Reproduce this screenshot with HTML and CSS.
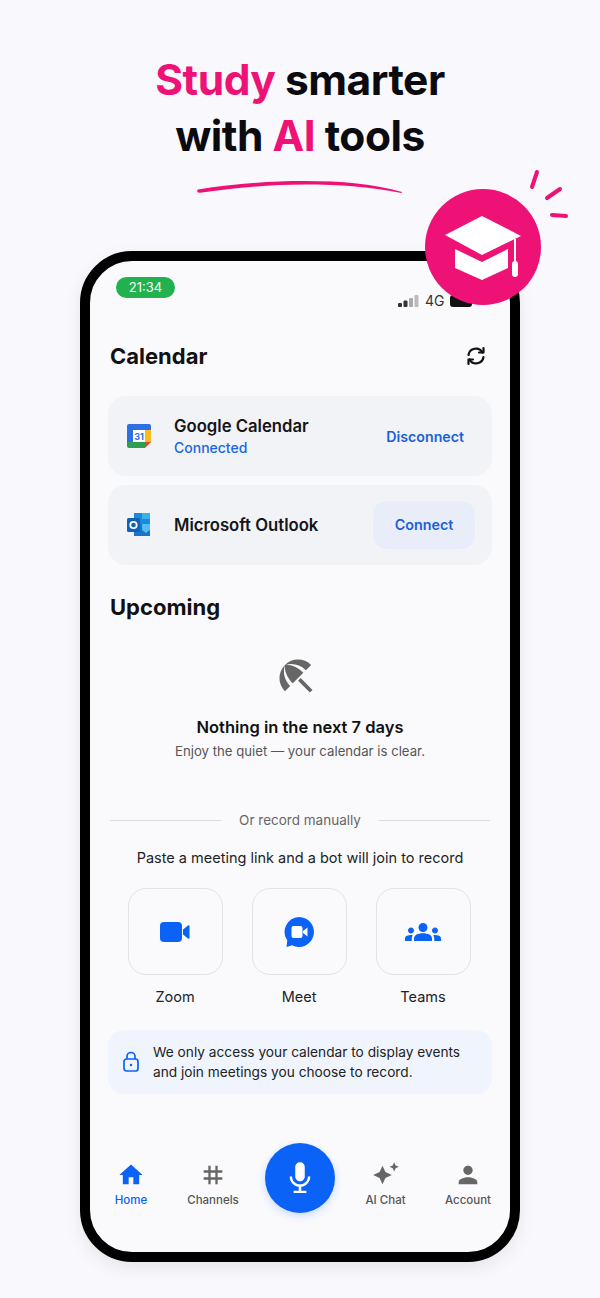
FILE: index.html
```html
<!DOCTYPE html>
<html>
<head>
<title>Study smarter with AI tools</title>
<link rel="stylesheet" href="styles.css">
</head>
<body>

<div class="page">

	<h1 class="headline"><span class="pink">Study</span> smarter<br>with <span class="pink">AI</span> tools</h1>

	<svg class="swoosh" width="206" height="14" viewBox="0 0 206 14">
		<path d="M1 9.500C35 4 70 1 108 1c36 0 70 3 97 11l-.4 1C176 7 142 4.500 108 4.500 72 4.500 36 8 3 12.800 0 13.200-.5 10 1 9.500z" fill="#ee1277"/>
	</svg>

	<svg class="badge" width="150" height="150" viewBox="0 0 150 150">
		<circle cx="63" cy="82" r="58" fill="#ee1277"/>
		<path d="M62 51l39 20-39 19-37-20z" fill="#fff"/>
		<path d="M35 84l27 13 26-13v19l-26 12-27-12z" fill="#fff"/>
		<path d="M95 74v22" stroke="#fff" stroke-width="2"/>
		<rect x="92" y="96" width="6" height="16" rx="3" fill="#fff"/>
		<g stroke="#ee1277" stroke-width="4" stroke-linecap="round">
			<path d="M117 7l-5 15"/>
			<path d="M140 24l-13 9"/>
			<path d="M132 50l14 1"/>
		</g>
	</svg>

	<div class="phone">
		<div class="status">
			<span class="clock">21:34</span>
			<div class="status-right">
				<svg width="22" height="12" viewBox="0 0 22 12">
					<rect x="0" y="8" width="4" height="4" rx="1" fill="#333"/>
					<rect x="5.500" y="5.500" width="4" height="6.500" rx="1" fill="#333"/>
					<rect x="11" y="3" width="4" height="9" rx="1" fill="#aaa"/>
					<rect x="16.500" y="0" width="4" height="12" rx="1" fill="#bbb"/>
				</svg>
				<span>4G</span>
				<span class="battery"></span>
			</div>
		</div>

		<div class="title-row">
			<h2>Calendar</h2>
			<svg class="sync" width="24" height="24" viewBox="0 0 24 24" fill="none" stroke="#111" stroke-width="2.200" stroke-linecap="round" stroke-linejoin="round">
				<path d="M4.500 11A7.500 7.500 0 0 1 18.500 8.500"/>
				<path d="M19.500 4v4.500H15"/>
				<path d="M19.500 13A7.500 7.500 0 0 1 5.500 15.500"/>
				<path d="M4.500 20v-4.500H9"/>
			</svg>
		</div>

		<div class="card">
			<svg class="card-icon" width="26" height="26" viewBox="0 0 26 26">
				<path d="M3 1h20a2 2 0 0 1 2 2v4H1V3a2 2 0 0 1 2-2z" fill="#2f6fe4"/>
				<rect x="1" y="7" width="6" height="12" fill="#2f6fe4"/>
				<rect x="19" y="7" width="6" height="13" fill="#f6bd1c"/>
				<path d="M1 19h18v6H3a2 2 0 0 1-2-2z" fill="#2f9e52"/>
				<path d="M19 19h6l-6 6z" fill="#e5432f"/>
				<rect x="7" y="7" width="12" height="12" fill="#fff"/>
				<text x="13" y="17" class="cal-day">31</text>
			</svg>
			<div class="card-text">
				<div class="card-name">Google Calendar</div>
				<div class="card-state">Connected</div>
			</div>
			<span class="card-link">Disconnect</span>
		</div>

		<div class="card">
			<svg class="card-icon" width="26" height="26" viewBox="0 0 26 26">
				<rect x="8" y="1" width="16" height="11" fill="#1e88d9"/>
				<rect x="16" y="1" width="8" height="6" fill="#35b2ec"/>
				<path d="M8 12h16v12H8z" fill="#1a74c9"/>
				<path d="M16 12h8v6l-4 3-4-3z" fill="#52bdf0"/>
				<rect x="1" y="6" width="13" height="14" rx="1.500" fill="#0f63b8"/>
				<circle cx="7.500" cy="13" r="3.200" fill="none" stroke="#fff" stroke-width="1.800"/>
			</svg>
			<div class="card-text">
				<div class="card-name">Microsoft Outlook</div>
			</div>
			<span class="card-btn">Connect</span>
		</div>

		<h2 class="upcoming">Upcoming</h2>

		<div class="empty">
			<svg class="empty-icon" width="44" height="44" viewBox="0 0 24 24" fill="#666"><path d="M13.127 14.560l1.430-1.430 6.440 6.443L19.570 21zm4.293-5.730l2.860-2.860c-3.950-3.950-10.350-3.960-14.300-.02 3.930-1.300 8.310-.25 11.440 2.880zM5.950 5.980c-3.940 3.950-3.930 10.350.02 14.300l2.860-2.860C5.700 14.290 4.650 9.910 5.950 5.980zm.02-.02l-.01.01c-.38 3.010 1.170 6.880 4.300 10.020l5.730-5.730c-3.130-3.130-7.010-4.680-10.020-4.300z"/></svg>
			<div class="empty-title">Nothing in the next 7 days</div>
			<div class="empty-sub">Enjoy the quiet — your calendar is clear.</div>
		</div>

		<div class="divider"><span>Or record manually</span></div>
		<p class="paste">Paste a meeting link and a bot will join to record</p>

		<div class="services">
			<div class="service">
				<div class="service-box">
					<svg width="30" height="22" viewBox="0 0 30 22" fill="#0b62f6"><rect x="0" y="1" width="22" height="20" rx="4"/><path d="M23 8.500l5-4c.8-.6 1.500-.2 1.500.7v11.600c0 .9-.7 1.300-1.500.7l-5-4z"/></svg>
				</div>
				<span>Zoom</span>
			</div>
			<div class="service">
				<div class="service-box">
					<svg width="30" height="30" viewBox="0 0 30 30"><path d="M15 0a15 15 0 1 1-7 28.300L2.500 30l.8-6.500A15 15 0 0 1 15 0z" fill="#0b62f6"/><rect x="7.500" y="9" width="11" height="12" rx="2" fill="#fff"/><path d="M19 14l4.500-3.500v9L19 16z" fill="#fff"/></svg>
				</div>
				<span>Meet</span>
			</div>
			<div class="service">
				<div class="service-box">
					<svg width="36" height="36" viewBox="0 0 24 24" fill="#0b62f6"><path d="M12 12.750c1.630 0 3.070.39 4.240.9 1.080.48 1.760 1.560 1.760 2.730V18H6v-1.610c0-1.180.68-2.260 1.760-2.730 1.170-.52 2.610-.91 4.240-.91zM4 13c1.100 0 2-.9 2-2s-.9-2-2-2-2 .9-2 2 .9 2 2 2zm1.130 1.100c-.37-.06-.74-.1-1.130-.1-.99 0-1.930.21-2.780.58C.48 14.900 0 15.620 0 16.430V18h4.500v-1.610c0-.83.23-1.610.63-2.290zM20 13c1.100 0 2-.9 2-2s-.9-2-2-2-2 .9-2 2 .9 2 2 2zm4 3.430c0-.81-.48-1.530-1.220-1.850-.85-.37-1.790-.58-2.780-.58-.39 0-.76.04-1.130.1.4.68.63 1.460.63 2.290V18H24v-1.570zM12 6c1.660 0 3 1.340 3 3s-1.340 3-3 3-3-1.340-3-3 1.340-3 3-3z"/></svg>
				</div>
				<span>Teams</span>
			</div>
		</div>

		<div class="notice">
			<svg class="notice-icon" width="20" height="22" viewBox="0 0 20 22" fill="none" stroke="#0b62f6" stroke-width="1.700"><rect x="3" y="8" width="14" height="12" rx="2.500"/><path d="M6 8V5.500a4 4 0 0 1 8 0V8"/><circle cx="10" cy="14" r="1.200" fill="#0b62f6" stroke="none"/></svg>
			<p>We only access your calendar to display events and join meetings you choose to record.</p>
		</div>

		<nav class="nav">
			<div class="nav-item active">
				<svg width="28" height="28" viewBox="0 0 24 24"><path d="M10 20v-6h4v6h4.500a.5.500 0 0 0 .5-.5V12h3L12 3 2 12h3v7.500a.5.500 0 0 0 .5.5z"/></svg>
				<span>Home</span>
			</div>
			<div class="nav-item">
				<svg width="28" height="28" viewBox="0 0 24 24"><path d="M20 10V8h-4V4h-2v4h-4V4H8v4H4v2h4v4H4v2h4v4h2v-4h4v4h2v-4h4v-2h-4v-4h4zm-6 4h-4v-4h4v4z"/></svg>
				<span>Channels</span>
			</div>
			<div class="mic">
				<svg width="38" height="38" viewBox="0 0 24 24" fill="#fff"><path d="M12 14c1.660 0 3-1.340 3-3V5c0-1.660-1.340-3-3-3S9 3.340 9 5v6c0 1.660 1.340 3 3 3zM17 11c0 2.760-2.240 5-5 5s-5-2.240-5-5H5.500c0 3.400 2.600 6.100 5.700 6.500V20H8v1.500h8V20h-3.200v-2.500c3.100-.4 5.700-3.100 5.700-6.500z"/></svg>
			</div>
			<div class="nav-item">
				<svg width="28" height="28" viewBox="0 0 24 24"><path d="M19 9l1.250-2.750L23 5l-2.750-1.250L19 1l-1.250 2.750L15 5l2.750 1.250L19 9zm-7.500.5L9 4 6.500 9.500 1 12l5.500 2.500L9 20l2.500-5.500L17 12l-5.500-2.500z"/></svg>
				<span>AI Chat</span>
			</div>
			<div class="nav-item">
				<svg width="28" height="28" viewBox="0 0 24 24"><path d="M12 12c2.210 0 4-1.790 4-4s-1.790-4-4-4-4 1.790-4 4 1.790 4 4 4zm0 2c-2.670 0-8 1.340-8 4v2h16v-2c0-2.660-5.330-4-8-4z"/></svg>
				<span>Account</span>
			</div>
		</nav>
	</div>

</div>

</body>
</html>
```

FILE: styles.css
```css
body {
	margin: 0;
	background-color: #f9f9fd;
	font-family: "Inter", "Liberation Sans", sans-serif;
	color: #111;
}

h1, h2, p {
	margin: 0;
}

.page {
	position: relative;
	width: 600px;
	height: 1298px;
	overflow: hidden;
	display: flex;
	flex-direction: column;
	align-items: center;
}

/* heading */

.headline {
	margin-top: 52px;
	font-size: 42.500px;
	line-height: 56px;
	font-weight: 700;
	letter-spacing: -0.5px;
	text-align: center;
	color: #0b0b0f;
}

.pink {
	color: #ee1277;
}

.swoosh {
	display: block;
	margin-top: 16px;
}

.badge {
	position: absolute;
	left: 420px;
	top: 165px;
	z-index: 2;
}

/* phone */

.phone {
	box-sizing: border-box;
	width: 440px;
	height: 1011px;
	margin-top: 57px;
	border: 10px solid #000;
	border-radius: 52px;
	padding: 0 18px;
	display: flex;
	flex-direction: column;
	background-color: #fafafd;
	box-shadow: 0 6px 18px rgba(0, 0, 0, 0.08);
}

.status {
	display: flex;
	justify-content: space-between;
	align-items: flex-start;
	height: 46px;
	padding: 16px 0 0 8px;
}

.clock {
	width: 59px;
	height: 21px;
	line-height: 21px;
	border-radius: 11px;
	background-color: #22b14f;
	color: #fff;
	font-size: 13px;
	text-align: center;
}

.status-right {
	display: flex;
	align-items: center;
	gap: 5px;
	width: 94px;
	margin-top: 15px;
	font-size: 14px;
	color: #333;
}

.battery {
	width: 22px;
	height: 12px;
	border-radius: 3px;
	background-color: #111;
}

.title-row {
	display: flex;
	justify-content: space-between;
	align-items: center;
	padding: 0 2px;
	margin-top: 15px;
	height: 36px;
}

h2 {
	font-size: 22px;
	font-weight: 700;
}

.sync {
	margin-right: 2px;
}

.card {
	display: flex;
	align-items: center;
	height: 80px;
	box-sizing: border-box;
	padding: 0 18px;
	margin-bottom: 9px;
	border-radius: 18px;
	background-color: #f2f3f6;
}

.title-row + .card {
	margin-top: 22px;
}

.card-icon {
	flex: none;
}

.card-text {
	flex: 1;
	margin-left: 22px;
}

.card-name {
	font-size: 16.700px;
	font-weight: 600;
	color: #15151a;
}

.card-state {
	margin-top: 3px;
	font-size: 14px;
	font-weight: 500;
	color: #1a66e0;
}

.card-link {
	margin-right: 10px;
	font-size: 14.200px;
	font-weight: 600;
	color: #1a5fd8;
}

.card-btn {
	width: 102px;
	height: 48px;
	margin-right: -1px;
	line-height: 48px;
	border-radius: 14px;
	background-color: #e8edf9;
	text-align: center;
	font-size: 14.300px;
	font-weight: 600;
	color: #1a5fd8;
}

.cal-day {
	font-size: 9px;
	font-weight: 700;
	text-anchor: middle;
	fill: #2f6fe4;
}

.upcoming {
	margin: 15px 0 0 2px;
	line-height: 36px;
}

.empty {
	display: flex;
	flex-direction: column;
	align-items: center;
	margin-top: 29px;
}

.empty-icon {
	margin-right: 8px;
}

.empty-title {
	margin-top: 19px;
	font-size: 16.500px;
	font-weight: 600;
	color: #111;
}

.empty-sub {
	margin-top: 6px;
	font-size: 13.200px;
	color: #555;
}

.divider {
	display: flex;
	align-items: center;
	gap: 18px;
	margin: 53px 2px 0;
	font-size: 13.500px;
	color: #666;
}

.divider::before, .divider::after {
	content: "";
	flex: 1;
	height: 1px;
	background-color: #d9d9de;
}

.paste {
	margin-top: 21px;
	text-align: center;
	font-size: 14.500px;
	color: #222;
}

.services {
	display: flex;
	justify-content: center;
	gap: 29px;
	margin-top: 22px;
	padding-right: 2px;
}

.service {
	display: flex;
	flex-direction: column;
	align-items: center;
	gap: 13px;
	font-size: 14.500px;
	color: #222;
}

.service-box {
	box-sizing: border-box;
	width: 95px;
	height: 87px;
	display: flex;
	align-items: center;
	justify-content: center;
	border: 1.500px solid #e2e2e8;
	border-radius: 18px;
}

.notice {
	display: flex;
	align-items: center;
	gap: 12px;
	height: 64px;
	margin-top: 25px;
	padding: 0 13px;
	border-radius: 16px;
	background-color: #f0f4fc;
}

.notice-icon {
	flex: none;
}

.notice p {
	font-size: 13.700px;
	line-height: 20px;
	color: #222;
}

/* bottom nav */

.nav {
	display: grid;
	grid-template-columns: 82px 82px 91px 81px 84px;
	margin: auto -18px 39px;
	height: 70px;
}

.nav-item {
	display: flex;
	flex-direction: column;
	align-items: center;
	gap: 4px;
	padding-top: 18px;
	font-size: 11.500px;
	font-weight: 500;
	color: #555;
	fill: #666;
}

.nav-item.active {
	color: #0b62f6;
	fill: #0b62f6;
}

.mic {
	width: 70px;
	height: 70px;
	justify-self: center;
	display: flex;
	align-items: center;
	justify-content: center;
	border-radius: 50%;
	background-color: #0b62f6;
	box-shadow: 0 3px 8px rgba(11, 98, 246, 0.2);
}
```
